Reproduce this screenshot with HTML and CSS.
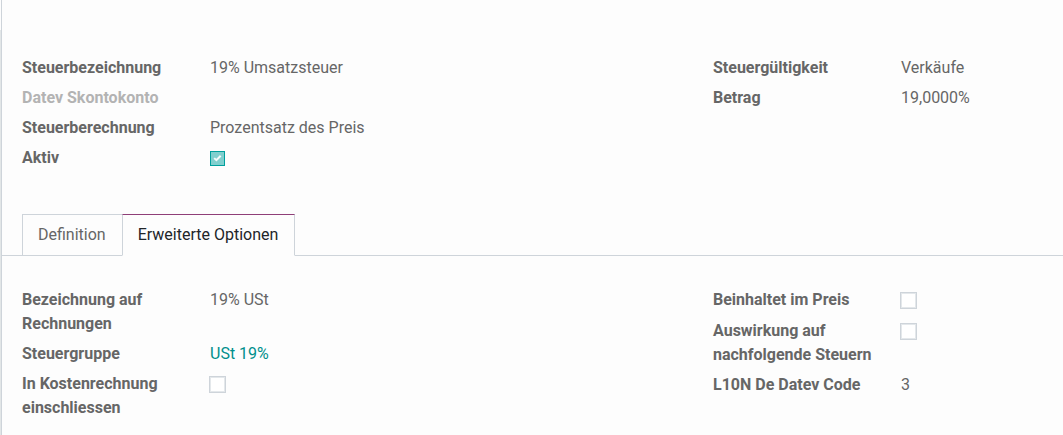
FILE: index.html
```html
<!DOCTYPE html>
<html lang="de">
<head>
<meta charset="utf-8">
<title>Steuer</title>
<link rel="stylesheet" href="styles.css">
</head>
<body>
<main class="sheet">
  <section class="groups groups-main">
    <div class="group">
      <div class="field"><span class="label" id="l-name">Steuerbezeichnung</span><span class="value" aria-labelledby="l-name">19% Umsatzsteuer</span></div>
      <div class="field"><span class="label label-empty">Datev Skontokonto</span></div>
      <div class="field"><span class="label" id="l-calc">Steuerberechnung</span><span class="value" aria-labelledby="l-calc">Prozentsatz des Preis</span></div>
      <div class="field">
        <label class="label" for="active">Aktiv</label>
        <span class="check check-on"><input class="check-input" type="checkbox" id="active" checked><svg class="check-mark" viewBox="0 0 9 8" aria-hidden="true"><path d="M1.2 4.1 3.4 6.2 7.7 1.8"/></svg></span>
      </div>
    </div>
    <div class="group">
      <div class="field"><span class="label" id="l-scope">Steuergültigkeit</span><span class="value" aria-labelledby="l-scope">Verkäufe</span></div>
      <div class="field"><span class="label" id="l-amount">Betrag</span><span class="value" aria-labelledby="l-amount">19,0000%</span></div>
    </div>
  </section>

  <nav class="tabs" role="tablist">
    <button class="tab" type="button" role="tab" aria-selected="false">Definition</button>
    <button class="tab tab-active" type="button" role="tab" aria-selected="true">Erweiterte Optionen</button>
  </nav>

  <section class="groups groups-options" role="tabpanel">
    <div class="group">
      <div class="field"><span class="label" id="l-invoice">Bezeichnung auf Rechnungen</span><span class="value" aria-labelledby="l-invoice">19% USt</span></div>
      <div class="field"><span class="label">Steuergruppe</span><a class="value link" href="#">USt 19%</a></div>
      <div class="field">
        <label class="label" for="analytic">In Kostenrechnung einschliessen</label>
        <span class="check"><input class="check-input" type="checkbox" id="analytic"></span>
      </div>
    </div>
    <div class="group">
      <div class="field">
        <label class="label" for="included">Beinhaltet im Preis</label>
        <span class="check"><input class="check-input" type="checkbox" id="included"></span>
      </div>
      <div class="field">
        <label class="label" for="affects">Auswirkung auf nachfolgende Steuern</label>
        <span class="check"><input class="check-input" type="checkbox" id="affects"></span>
      </div>
      <div class="field"><span class="label" id="l-code">L10N De Datev Code</span><span class="value" aria-labelledby="l-code">3</span></div>
    </div>
  </section>
</main>
</body>
</html>
```
FILE: styles.css
```css
* {
  box-sizing: border-box;
}

body {
  margin: 0;
  padding-left: 1px;
  background: linear-gradient(#fdfdfd 30px, #e2e6e7 30px);
  color: #666;
  font: 16px/24px Roboto, "Liberation Sans", sans-serif;
}

.sheet {
  min-height: 100vh;
  border-left: 1px solid #ced4da;
  background: #fdfdfd;
}

.groups {
  display: grid;
  grid-template-columns: 1fr 350px;
  padding-left: 20px;
}

.groups-main {
  padding-top: 56px;
  padding-bottom: 38px;
}

.groups-options {
  padding-top: 32px;
}

.field {
  display: grid;
  grid-template-columns: 164px auto;
  justify-content: start;
  column-gap: 24px;
  padding-bottom: 6px;
}

.label {
  font-weight: 700;
}

.label-empty {
  color: #b3b3b3;
}

.link {
  color: #008f8c;
  text-decoration: none;
}

.check {
  display: grid;
  place-items: center;
  width: 17px;
  height: 25px;
  margin-left: -1px;
}

.check-on {
  height: 24px;
}

.check-input {
  appearance: none;
  grid-area: 1 / 1;
  width: 17px;
  height: 17px;
  margin: 0;
  border: 1px solid #ced4da;
  background: #fff;
  box-shadow: inset 0 0 0 1px #e4e8eb;
}

.check-on .check-input {
  width: 15px;
  height: 15px;
  border-color: #00a09d;
  background: #80cfce;
  box-shadow: none;
}

.check-mark {
  grid-area: 1 / 1;
  width: 9px;
  height: 8px;
  fill: none;
  stroke: #f4fbfb;
  stroke-width: 2;
  pointer-events: none;
}

.tabs {
  display: flex;
  padding-left: 20px;
  border-bottom: 1px solid #ced4da;
}

.tab {
  height: 42px;
  margin: 0 -1px -1px 0;
  padding: 0 16px 0 15px;
  border: 1px solid #ced4da;
  background: #fdfdfd;
  color: #666;
  font: inherit;
}

.tab-active {
  border-top-color: #8f3f78;
  border-bottom-color: #fdfdfd;
  color: #212529;
}
```
